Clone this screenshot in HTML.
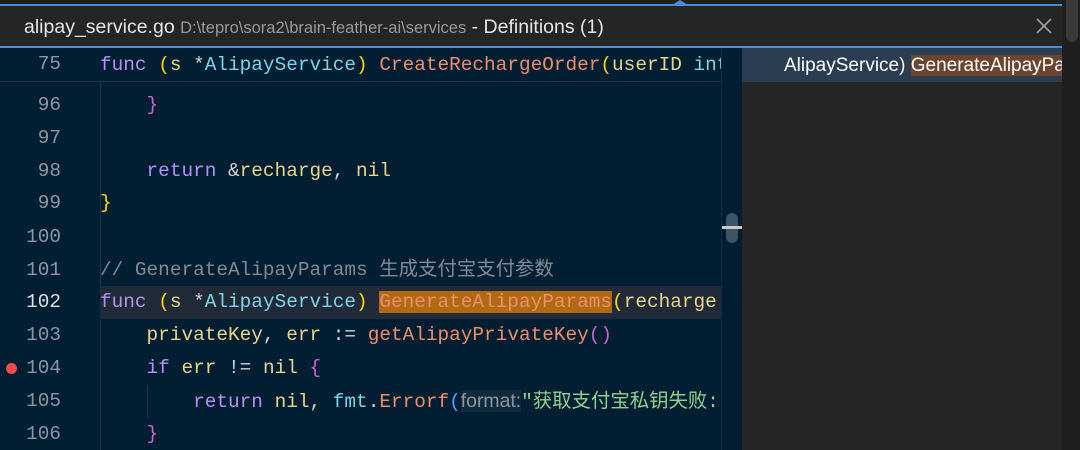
<!DOCTYPE html>
<html><head><meta charset="utf-8"><style>
*{margin:0;padding:0;box-sizing:border-box}
body{width:1080px;height:450px;overflow:hidden;background:#1e1e1e;position:relative;font-family:"Liberation Sans","Noto Sans CJK SC",sans-serif}
.top{position:absolute;left:0;top:0;width:1080px;height:5px;background:#1f1f1f}
.bl1{position:absolute;left:0;top:4px;width:1062px;height:2px;background:#4a8fd6}
.title{position:absolute;left:0;top:6px;width:1062px;height:40px;background:#252526;color:#e6e6e6;font-size:19.5px;line-height:42px;padding-left:24px;white-space:nowrap}
.title .p{color:#9a9a9a;font-size:16.5px}
.x{position:absolute;left:1034px;top:16px;width:20px;height:20px}
.bl2{position:absolute;left:0;top:46px;width:1062px;height:2px;background:#4a8fd6}
.code{position:absolute;left:0;top:48px;width:742px;height:402px;background:#011e33;overflow:hidden}
.sb{position:absolute;left:721px;top:48px;width:21px;height:402px;background:#011d31;border-left:1px solid #0d2c42}
.thumb{position:absolute;left:726px;top:213px;width:12px;height:30px;border-radius:6px;background:#3d5366}
.tick{position:absolute;left:722px;top:226px;width:20px;height:3px;background:#c8c8c8}
.right{position:absolute;left:742px;top:48px;width:320px;height:402px;background:#262626}
.rsel{position:absolute;left:742px;top:48px;width:320px;height:34px;background:#2a3d52;color:#fff;font-size:19px;line-height:36px;padding-left:42px;white-space:nowrap;overflow:hidden}
.rsel span{background:#6b4530}
.rsb{position:absolute;left:1062px;top:0;width:18px;height:450px;background:#1f1f1f}
.rsbt{position:absolute;left:1066px;top:0;width:12px;height:42px;background:#3a3a3a;border-radius:0 0 6px 6px}
.caret{position:absolute;left:672px;top:0;width:0;height:0;border-left:8px solid transparent;border-right:8px solid transparent;border-bottom:5px solid #4a8fd6}
.ln{position:absolute;left:0;width:721px;height:33px;font-family:"Liberation Mono","Noto Sans CJK SC",monospace;font-size:19.4px;line-height:33px;white-space:pre;color:#d4d4d4}
.ln .n{position:absolute;left:0;width:61px;text-align:right;color:#8a96a3}
.ln .c{position:absolute;left:100px}
.k{color:#b392f0}.y{color:#ffd700}.v{color:#e8d589}.t{color:#7fd3e6}.f{color:#f08d6a}.m{color:#cc66cc}.cm{color:#7f8a95}.s{color:#8fd18f}.w{color:#d4d4d4}
.hl{background:#b06a12}
.hint{background:#0f2a3d;color:#8c98a3;font-family:"Liberation Sans",sans-serif}
.g{position:absolute;width:1px;background:#1d3347}
</style></head><body>
<div class="top"></div><div class="caret"></div>
<div class="bl1"></div>
<div class="title">alipay_service.go <span class="p">D:\tepro\sora2\brain-feather-ai\services</span> - Definitions (1)</div>
<svg class="x" viewBox="0 0 20 20"><path d="M3 3L17 17M17 3L3 17" stroke="#a0a0a0" stroke-width="1.6"/></svg>
<div class="bl2"></div>
<div class="code">
<div class="g" style="left:100px;top:34px;height:230px"></div>
<div class="g" style="left:100px;top:272px;height:130px"></div>
<div class="g" style="left:147px;top:337px;height:33px"></div>
<div class="ln" style="top:41px"><span class="n">96</span><span class="c">    <span class="m">}</span></span></div>
<div class="ln" style="top:74px"><span class="n">97</span></div>
<div class="ln" style="top:107px"><span class="n">98</span><span class="c">    <span class="k">return</span> <span class="w">&amp;</span><span class="v">recharge</span><span class="w">,</span> <span class="v">nil</span></span></div>
<div class="ln" style="top:139px"><span class="n">99</span><span class="c"><span class="y">}</span></span></div>
<div class="ln" style="top:173px"><span class="n">100</span></div>
<div class="ln" style="top:206px"><span class="n">101</span><span class="c"><span class="cm">// GenerateAlipayParams 生成支付宝支付参数</span></span></div>
<div class="ln" style="top:238px;background:#202a38;left:100px;width:621px"></div>
<div class="ln" style="top:238px"><span class="n" style="color:#e0e0e0">102</span><span class="c"><span class="k">func</span> <span class="y">(</span><span class="v">s</span> <span class="w">*</span><span class="t">AlipayService</span><span class="y">)</span> <span class="f hl">GenerateAlipayParams</span><span class="y">(</span><span class="v">recharge</span> <span class="w">*</span></span></div>
<div class="ln" style="top:271px"><span class="n">103</span><span class="c">    <span class="v">privateKey</span><span class="w">,</span> <span class="v">err</span> <span class="w">:=</span> <span class="f">getAlipayPrivateKey</span><span class="m">()</span></span></div>
<div class="ln" style="top:304px"><span class="n">104</span><span class="c">    <span class="k">if</span> <span class="v">err</span> <span class="w">!=</span> <span class="v">nil</span> <span class="m">{</span></span></div>
<div style="position:absolute;left:6px;top:315px;width:11px;height:11px;border-radius:50%;background:#f14c4c"></div>
<div class="ln" style="top:337px;width:760px"><span class="n">105</span><span class="c">        <span class="k">return</span> <span class="v">nil</span><span class="w">,</span> <span class="t">fmt</span><span class="w">.</span><span class="f">Errorf</span><span style="color:#4fa6ff">(</span><span class="hint">format:</span><span class="s">"获取支付宝私钥失败:</span></span></div>
<div class="ln" style="top:370px"><span class="n">106</span><span class="c">    <span class="m">}</span></span></div>
<div class="ln" style="top:0;background:#011e33;border-bottom:1px solid #1a3347;height:34px"><span class="n">75</span><span class="c" style="top:1px"><span class="k">func</span> <span class="y">(</span><span class="v">s</span> <span class="w">*</span><span class="t">AlipayService</span><span class="y">)</span> <span class="f">CreateRechargeOrder</span><span class="y">(</span><span class="v">userID</span> <span class="t">int</span></span></div>
</div>
<div class="sb"></div><div class="thumb"></div><div class="tick"></div>
<div class="right"></div>
<div class="rsel">AlipayService) <span>GenerateAlipayParams</span></div>
<div class="rsb"></div><div class="rsbt"></div>
</body></html>
